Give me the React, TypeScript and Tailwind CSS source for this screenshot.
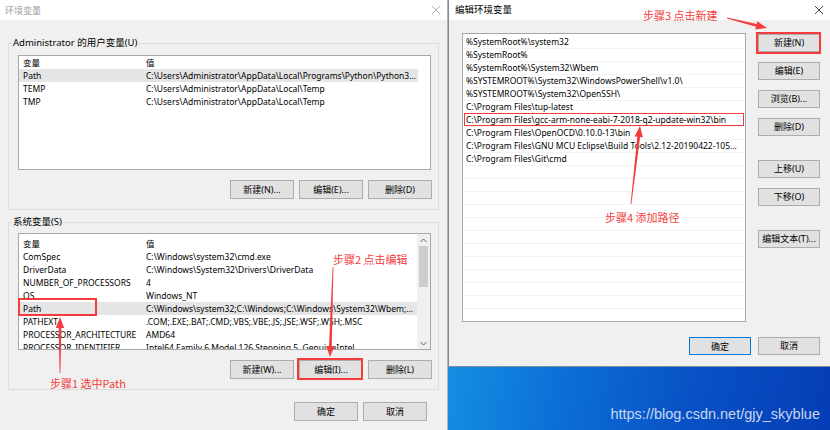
import React from "react";

const userVars: [string, string][] = [
  ["Path", "C:\\Users\\Administrator\\AppData\\Local\\Programs\\Python\\Python3..."],
  ["TEMP", "C:\\Users\\Administrator\\AppData\\Local\\Temp"],
  ["TMP", "C:\\Users\\Administrator\\AppData\\Local\\Temp"],
];

const sysVars: [string, string][] = [
  ["ComSpec", "C:\\Windows\\system32\\cmd.exe"],
  ["DriverData", "C:\\Windows\\System32\\Drivers\\DriverData"],
  ["NUMBER_OF_PROCESSORS", "4"],
  ["OS", "Windows_NT"],
  ["Path", "C:\\Windows\\system32;C:\\Windows;C:\\Windows\\System32\\Wbem;..."],
  ["PATHEXT", ".COM;.EXE;.BAT;.CMD;.VBS;.VBE;.JS;.JSE;.WSF;.WSH;.MSC"],
  ["PROCESSOR_ARCHITECTURE", "AMD64"],
  ["PROCESSOR_IDENTIFIER", "Intel64 Family 6 Model 126 Stepping 5, GenuineIntel"],
];

const paths = [
  "%SystemRoot%\\system32",
  "%SystemRoot%",
  "%SystemRoot%\\System32\\Wbem",
  "%SYSTEMROOT%\\System32\\WindowsPowerShell\\v1.0\\",
  "%SYSTEMROOT%\\System32\\OpenSSH\\",
  "C:\\Program Files\\tup-latest",
  "C:\\Program Files\\gcc-arm-none-eabi-7-2018-q2-update-win32\\bin",
  "C:\\Program Files\\OpenOCD\\0.10.0-13\\bin",
  "C:\\Program Files\\GNU MCU Eclipse\\Build Tools\\2.12-20190422-105...",
  "C:\\Program Files\\Git\\cmd",
];

function CloseX({ color }: { color: string }) {
  return (
    <svg width="10" height="10" viewBox="0 0 10 10">
      <path d="M1 1L9 9M9 1L1 9" stroke={color} strokeWidth="0.9" />
    </svg>
  );
}

function Btn({ children, className = "w-[64px] h-[19px]" }: { children: React.ReactNode; className?: string }) {
  return (
    <div className={`flex items-center justify-center border border-[#adadad] bg-[#e1e1e1] text-[9px] leading-[12px] text-black ${className}`}>
      {children}
    </div>
  );
}

function VarRow({ name, value, selected }: { name: string; value: string; selected?: boolean }) {
  return (
    <div className={`flex h-[13px] w-[399px] whitespace-nowrap text-[8.5px] leading-[13px] ${selected ? "bg-[#e5e5e5]" : ""}`}>
      <div className="w-[127px] shrink-0 pl-[4px]">{name}</div>
      <div className="min-w-0 flex-1 overflow-hidden">{value}</div>
    </div>
  );
}

function Chevron({ up }: { up?: boolean }) {
  return (
    <svg width="7" height="5" viewBox="0 0 7 5">
      <path d={up ? "M0.5 4L3.5 1L6.5 4" : "M0.5 1L3.5 4L6.5 1"} stroke="#606060" strokeWidth="1" fill="none" />
    </svg>
  );
}

function arrowPoints(x1: number, y1: number, x2: number, y2: number) {
  const dx = x2 - x1;
  const dy = y2 - y1;
  const len = Math.hypot(dx, dy);
  const ux = dx / len;
  const uy = dy / len;
  const nx = -uy;
  const ny = ux;
  const head = 11;
  const bx = x2 - ux * head;
  const by = y2 - uy * head;
  const pts = [
    [x1 + nx * 0.4, y1 + ny * 0.4],
    [bx + nx * 1.4, by + ny * 1.4],
    [bx + nx * 4.2, by + ny * 4.2],
    [x2, y2],
    [bx - nx * 4.2, by - ny * 4.2],
    [bx - nx * 1.4, by - ny * 1.4],
    [x1 - nx * 0.4, y1 - ny * 0.4],
  ];
  return pts.map((p) => `${p[0].toFixed(1)},${p[1].toFixed(1)}`).join(" ");
}

function Annotations() {
  return (
    <div className="pointer-events-none absolute inset-0 font-['Noto_Sans_CJK_SC',sans-serif] text-[11px] leading-none text-[#f43c3c]">
      <svg width="830" height="430" className="absolute left-0 top-0">
        <polygon points={arrowPoints(60, 373, 60, 317)} fill="#f43c3c" />
        <polygon points={arrowPoints(333, 267, 330, 357)} fill="#f43c3c" />
        <polygon points={arrowPoints(727, 18, 767, 28)} fill="#f43c3c" />
        <polygon points={arrowPoints(631, 204, 640, 126)} fill="#f43c3c" />
      </svg>
      <div className="absolute left-[18px] top-[298px] h-[18px] w-[79px] border-2 border-[#f43c3c]" />
      <div className="absolute left-[297px] top-[358px] h-[22px] w-[66px] border-2 border-[#f43c3c]" />
      <div className="absolute left-[756px] top-[32px] h-[22px] w-[65px] border-2 border-[#f43c3c]" />
      <div className="absolute left-[464px] top-[113px] h-[13px] w-[280px] border-[1.5px] border-[#f43c3c]" />
      <div className="absolute left-[50px] top-[378px]">步骤1 选中Path</div>
      <div className="absolute left-[333px] top-[254px]">步骤2 点击编辑</div>
      <div className="absolute left-[643px] top-[10px]">步骤3 点击新建</div>
      <div className="absolute left-[605px] top-[212px]">步骤4 添加路径</div>
    </div>
  );
}

export default function App() {
  return (
    <div className="relative flex h-[430px] w-[830px] overflow-hidden bg-[#f0f0f0] font-['Noto_Sans','Noto_Sans_CJK_SC',sans-serif] text-[9px] leading-none text-black">
      {/* 环境变量 */}
      <div className="flex w-[448px] shrink-0 flex-col border-r border-[#b4b4b4] bg-[#f0f0f0]">
        <div className="flex h-[20px] shrink-0 items-center justify-between bg-white pl-[5px] pr-[6px] text-[#a0a0a0]">
          <span>环境变量</span>
          <CloseX color="#a8a8a8" />
        </div>
        <div className="flex flex-col px-[8px]">
          <div className="relative mt-[23px] w-[431px] border border-[#dcdcdc] pb-[10px] pl-[9px] pr-[6px] pt-[11px]">
            <span className="absolute left-[3px] top-[-6px] bg-[#f0f0f0] px-[1px] text-[9.5px]">Administrator 的用户变量(U)</span>
            <div className="h-[115px] w-[413px] overflow-hidden border border-[#a8a8a8] bg-white">
              <VarRow name="变量" value="值" />
              {userVars.map(([n, v], i) => (
                <VarRow key={n} name={n} value={v} selected={i === 0} />
              ))}
            </div>
            <div className="mt-[10px] flex justify-end gap-[5px]">
              <Btn>新建(N)...</Btn>
              <Btn>编辑(E)...</Btn>
              <Btn>删除(D)</Btn>
            </div>
          </div>
          <div className="relative mt-[12px] w-[431px] border border-[#dcdcdc] pb-[10px] pl-[9px] pr-[6px] pt-[10px]">
            <span className="absolute left-[3px] top-[-6px] bg-[#f0f0f0] px-[1px] text-[9.5px]">系统变量(S)</span>
            <div className="flex h-[117px] w-[413px] overflow-hidden border border-[#a8a8a8] bg-white">
              <div className="flex-1 overflow-hidden pt-[3px]">
                <VarRow name="变量" value="值" />
                {sysVars.map(([n, v]) => (
                  <VarRow key={n} name={n} value={v} selected={n === "Path"} />
                ))}
              </div>
              <div className="flex w-[13px] shrink-0 flex-col items-center bg-[#f0f0f0]">
                <div className="flex h-[12px] items-center"><Chevron up /></div>
                <div className="h-[41px] w-[9px] bg-[#cdcdcd]" />
                <div className="flex-1" />
                <div className="flex h-[12px] items-center"><Chevron /></div>
              </div>
            </div>
            <div className="mt-[10px] flex justify-end gap-[5px]">
              <Btn>新建(W)...</Btn>
              <Btn>编辑(I)...</Btn>
              <Btn>删除(L)</Btn>
            </div>
          </div>
          <div className="mt-[12px] flex justify-end gap-[5px] pr-[12px]">
            <Btn>确定</Btn>
            <Btn>取消</Btn>
          </div>
        </div>
      </div>

      {/* 编辑环境变量 */}
      <div className="flex flex-1 flex-col">
        <div className="flex h-[367px] shrink-0 flex-col border-b border-l border-[#7f8c99] bg-[#f0f0f0]">
          <div className="flex h-[20px] shrink-0 items-center justify-between bg-white pl-[6px] pr-[6px] text-[9.5px]">
            <span>编辑环境变量</span>
            <CloseX color="#333" />
          </div>
          <div className="flex flex-col pl-[13px] pr-[10px] pt-[13px]">
            <div className="flex items-start gap-[12px]">
              <div className="h-[289px] w-[284px] overflow-hidden border border-[#a8a8a8] bg-white pt-[2px] text-[8.5px]">
                {Array.from({ length: 23 }).map((_, i) => (
                  <div key={i} className="h-[13px] overflow-hidden whitespace-nowrap border-b border-[#f3f3f3] pl-[3px] leading-[12px]">
                    {paths[i] ?? ""}
                  </div>
                ))}
              </div>
              <div className="flex flex-col pt-[1px]">
                <Btn className="h-[18px] w-[62px]">新建(N)</Btn>
                <Btn className="mt-[10px] h-[18px] w-[62px]">编辑(E)</Btn>
                <Btn className="mt-[10px] h-[18px] w-[62px]">浏览(B)...</Btn>
                <Btn className="mt-[10px] h-[18px] w-[62px]">删除(D)</Btn>
                <Btn className="mt-[24px] h-[18px] w-[62px]">上移(U)</Btn>
                <Btn className="mt-[10px] h-[18px] w-[62px]">下移(O)</Btn>
                <Btn className="mt-[24px] h-[18px] w-[62px]">编辑文本(T)...</Btn>
              </div>
            </div>
            <div className="mt-[15px] flex justify-end gap-[7px]">
              <div className="flex h-[18px] w-[62px] items-center justify-center border border-[#0078d7] bg-[#e1e1e1]">确定</div>
              <Btn className="h-[18px] w-[62px]">取消</Btn>
            </div>
          </div>
        </div>
        <div className="flex flex-1 items-end justify-end bg-[linear-gradient(100deg,#148fe2_0%,#0c6fd6_30%,#0850c4_65%,#053db5_100%)] pb-[9px] pr-[10px]">
          <span className="font-['Liberation_Sans',sans-serif] text-[14.5px] leading-none text-[#c9d6f2]">https://blog.csdn.net/gjy_skyblue</span>
        </div>
      </div>

      <Annotations />
    </div>
  );
}
